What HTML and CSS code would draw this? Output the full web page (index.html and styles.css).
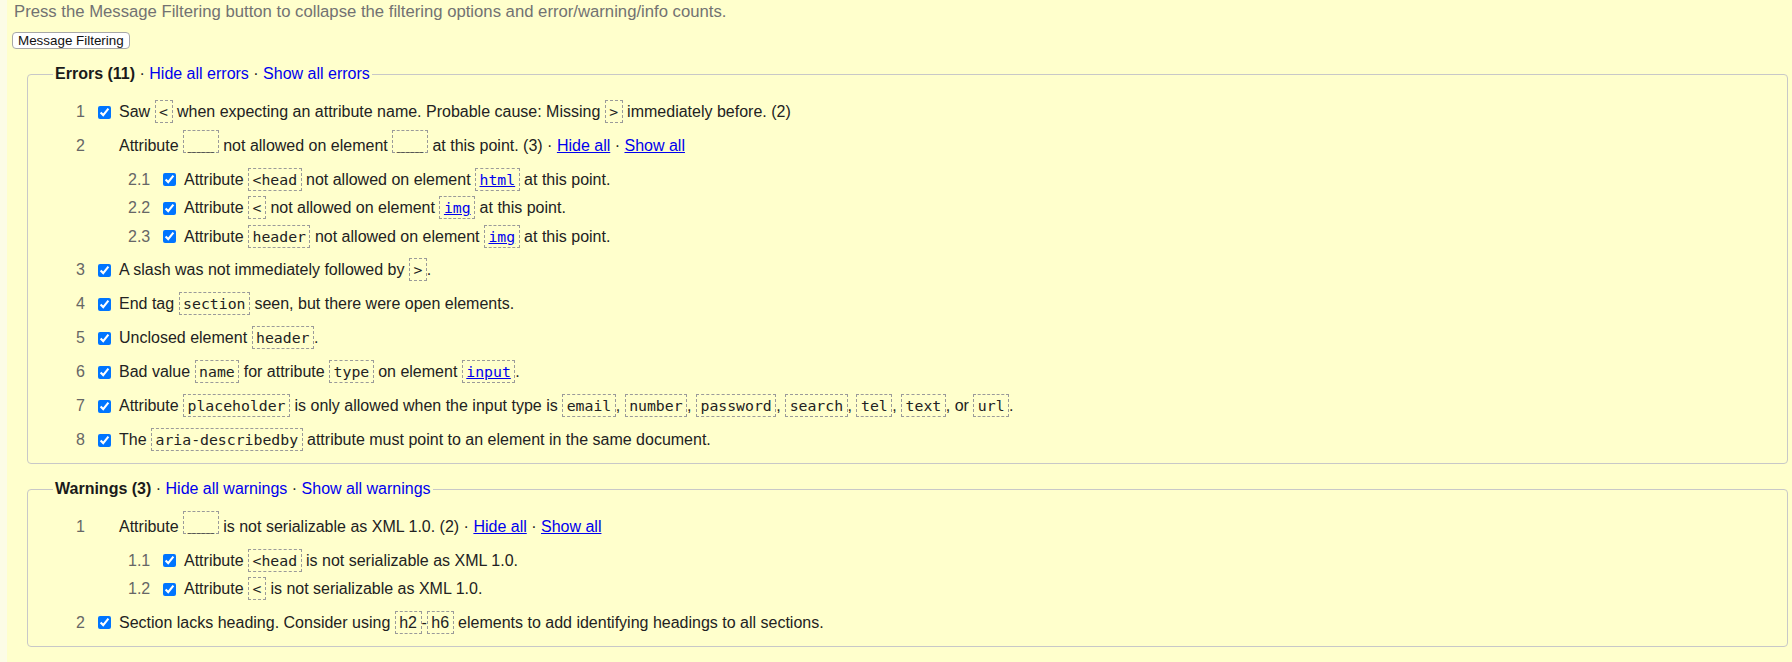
FILE: index.html
```html
<!DOCTYPE html>
<html lang="en">
<head>
<meta charset="utf-8">
<title>Message Filtering</title>
<link rel="stylesheet" href="styles.css">
</head>
<body>
<div class="page">
  <p class="hint">Press the Message Filtering button to collapse the filtering options and error/warning/info counts.</p>
  <button class="filter-btn" type="button">Message Filtering</button>

  <fieldset class="group">
    <legend><strong>Errors (11)</strong> · <a href="#">Hide all errors</a> · <a href="#">Show all errors</a></legend>
    <ol class="msgs">
      <li class="msg"><span class="num">1</span><input type="checkbox" checked><span class="text">Saw <code>&lt;</code> when expecting an attribute name. Probable cause: Missing <code>&gt;</code> immediately before. (2)</span></li>
      <li class="msg"><span class="num">2</span><span class="nocb"></span><span class="text">Attribute <code class="ph">___</code> not allowed on element <code class="ph">___</code> at this point. (3) · <a class="ul" href="#">Hide all</a> · <a class="ul" href="#">Show all</a></span></li>
      <li class="subwrap">
        <ol class="sub">
          <li class="msg"><span class="num">2.1</span><input type="checkbox" checked><span class="text">Attribute <code>&lt;head</code> not allowed on element <code><a href="#">html</a></code> at this point.</span></li>
          <li class="msg"><span class="num">2.2</span><input type="checkbox" checked><span class="text">Attribute <code>&lt;</code> not allowed on element <code><a href="#">img</a></code> at this point.</span></li>
          <li class="msg"><span class="num">2.3</span><input type="checkbox" checked><span class="text">Attribute <code>header</code> not allowed on element <code><a href="#">img</a></code> at this point.</span></li>
        </ol>
      </li>
      <li class="msg"><span class="num">3</span><input type="checkbox" checked><span class="text">A slash was not immediately followed by <code>&gt;</code>.</span></li>
      <li class="msg"><span class="num">4</span><input type="checkbox" checked><span class="text">End tag <code>section</code> seen, but there were open elements.</span></li>
      <li class="msg"><span class="num">5</span><input type="checkbox" checked><span class="text">Unclosed element <code>header</code>.</span></li>
      <li class="msg"><span class="num">6</span><input type="checkbox" checked><span class="text">Bad value <code>name</code> for attribute <code>type</code> on element <code><a href="#">input</a></code>.</span></li>
      <li class="msg"><span class="num">7</span><input type="checkbox" checked><span class="text">Attribute <code>placeholder</code> is only allowed when the input type is <code>email</code>, <code>number</code>, <code>password</code>, <code>search</code>, <code>tel</code>, <code>text</code>, or <code>url</code>.</span></li>
      <li class="msg"><span class="num">8</span><input type="checkbox" checked><span class="text">The <code>aria-describedby</code> attribute must point to an element in the same document.</span></li>
    </ol>
  </fieldset>

  <fieldset class="group">
    <legend><strong>Warnings (3)</strong> · <a href="#">Hide all warnings</a> · <a href="#">Show all warnings</a></legend>
    <ol class="msgs">
      <li class="msg"><span class="num">1</span><span class="nocb"></span><span class="text">Attribute <code class="ph">___</code> is not serializable as XML 1.0. (2) · <a class="ul" href="#">Hide all</a> · <a class="ul" href="#">Show all</a></span></li>
      <li class="subwrap">
        <ol class="sub">
          <li class="msg"><span class="num">1.1</span><input type="checkbox" checked><span class="text">Attribute <code>&lt;head</code> is not serializable as XML 1.0.</span></li>
          <li class="msg"><span class="num">1.2</span><input type="checkbox" checked><span class="text">Attribute <code>&lt;</code> is not serializable as XML 1.0.</span></li>
        </ol>
      </li>
      <li class="msg"><span class="num">2</span><input type="checkbox" checked><span class="text">Section lacks heading. Consider using <span class="tag">h2</span>-<span class="tag">h6</span> elements to add identifying headings to all sections.</span></li>
    </ol>
  </fieldset>
</div>
</body>
</html>
```

FILE: styles.css
```css
html, body {
  margin: 0;
  padding: 0;
}

body {
  background: #fcfce6;
  font-family: "Liberation Sans", Arial, sans-serif;
  color: #222;
}

.page {
  margin-left: 7px;
  min-height: 662px;
  box-sizing: border-box;
  padding: 3px 0 0 5px;
  background: #ffffcc;
  display: flex;
  flex-direction: column;
  align-items: flex-start;
}

.hint {
  margin: 0 0 0 2px;
  font-size: 16.7px;
  line-height: 18px;
  color: #727272;
}

.filter-btn {
  margin-top: 11px;
  height: 17px;
  padding: 0 5px;
  font-family: "Liberation Sans", Arial, sans-serif;
  font-size: 13.4px;
  line-height: 15px;
  color: #111;
  background: #fff;
  border: 1px solid #a8a8a8;
  border-radius: 4px;
}

.group {
  align-self: stretch;
  margin: 16px 4px 0 15px;
  padding: 12px 10px 6px 25px;
  border: 1px solid #c8c8c8;
  border-radius: 4px;
  min-width: 0;
}

.group legend {
  padding: 0 2px;
  font-size: 16px;
  line-height: 18px;
  color: #222;
}

.group legend strong {
  color: #1a1a1a;
}

a {
  color: #0000ee;
  text-decoration: none;
}

a.ul,
code a {
  text-decoration: underline;
}

.msgs,
.sub {
  list-style: none;
  margin: 0;
  padding: 0;
}

.msgs {
  padding-left: 23px;
}

.msg {
  display: flex;
  align-items: center;
  height: 34px;
  font-size: 16px;
  line-height: 18px;
  white-space: nowrap;
}

.num {
  flex: 0 0 22px;
  color: #666;
}

.msg input[type="checkbox"],
.nocb {
  flex: 0 0 13px;
  width: 13px;
  height: 13px;
  margin: 0 8px 0 0;
}

.sub {
  padding: 2.25px 0 2.25px 52px;
}

.sub .msg {
  height: 28.5px;
}

.sub .num {
  flex-basis: 35px;
}

code {
  font-family: "DejaVu Sans Mono", "Liberation Mono", monospace;
  font-size: 14.8px;
  padding: 2px 3.5px;
  border: 1px dashed #9a9a9a;
  color: #222;
}

code.ph {
  position: relative;
  top: -2px;
  padding-top: 4px;
  padding-bottom: 0;
}

.tag {
  padding: 2px 3.5px;
  border: 1px dashed #9a9a9a;
}
```
